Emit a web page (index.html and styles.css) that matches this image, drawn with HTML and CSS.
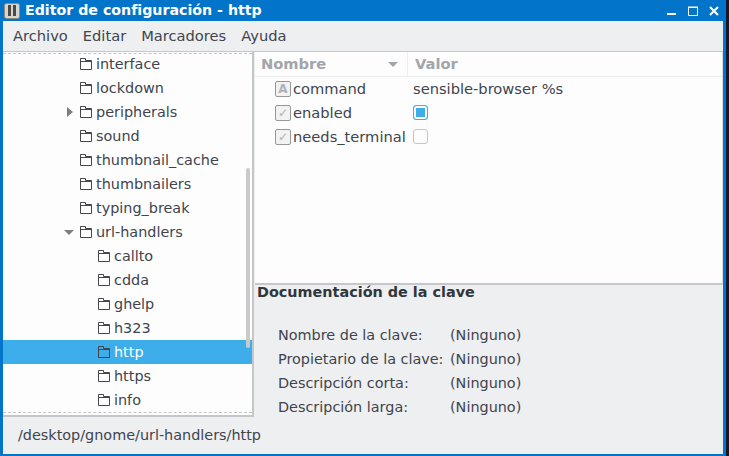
FILE: index.html
```html
<!DOCTYPE html>
<html lang="es">
<head>
    <meta charset="UTF-8">
    <title>Editor de configuración - http</title>
    <link rel="stylesheet" href="styles.css">
</head>
<body>
<svg class="defs" width="0" height="0">
    <symbol id="folder" viewBox="0 0 12 12">
        <path d="M.5 11.500V.5h5v2h6v9zM.5 3.500h11" fill="none" stroke="currentColor"/>
    </symbol>
</svg>
<div id="window">
    <div class="titlebar">
        <svg class="appicon" width="16" height="16" viewBox="0 0 16 16">
            <rect x=".5" y=".5" width="15" height="15" rx="2" fill="#d8d5cc" stroke="#8d8a82"/>
            <rect x="4" y="2" width="3" height="11" fill="#4a4a4a"/>
            <rect x="9" y="2" width="3" height="11" fill="#4a4a4a"/>
        </svg>
        <span class="title">Editor de configuración - http</span>
        <div class="winbtns">
            <svg width="10" height="10" viewBox="0 0 10 10"><rect y="7" width="9" height="2" fill="#fff"/></svg>
            <svg width="10" height="10" viewBox="0 0 10 10"><path d="M.5 1.500h9v8h-9zM0 1h10" fill="none" stroke="#fff"/></svg>
            <svg width="10" height="10" viewBox="0 0 10 10"><path d="M1 1l8 8M9 1l-8 8" fill="none" stroke="#fff" stroke-width="2"/></svg>
        </div>
    </div>
    <ul class="menubar">
        <li>Archivo</li>
        <li>Editar</li>
        <li>Marcadores</li>
        <li>Ayuda</li>
    </ul>
    <div class="main">
        <div class="left">
            <div class="tree">
                <ul class="treelist">
                    <li class="lvl1"><i class="arrow"></i><svg class="folder"><use href="#folder"/></svg>interface</li>
                    <li class="lvl1"><i class="arrow"></i><svg class="folder"><use href="#folder"/></svg>lockdown</li>
                    <li class="lvl1"><i class="arrow closed"></i><svg class="folder"><use href="#folder"/></svg>peripherals</li>
                    <li class="lvl1"><i class="arrow"></i><svg class="folder"><use href="#folder"/></svg>sound</li>
                    <li class="lvl1"><i class="arrow"></i><svg class="folder"><use href="#folder"/></svg>thumbnail_cache</li>
                    <li class="lvl1"><i class="arrow"></i><svg class="folder"><use href="#folder"/></svg>thumbnailers</li>
                    <li class="lvl1"><i class="arrow"></i><svg class="folder"><use href="#folder"/></svg>typing_break</li>
                    <li class="lvl1"><i class="arrow open"></i><svg class="folder"><use href="#folder"/></svg>url-handlers</li>
                    <li class="lvl2"><svg class="folder"><use href="#folder"/></svg>callto</li>
                    <li class="lvl2"><svg class="folder"><use href="#folder"/></svg>cdda</li>
                    <li class="lvl2"><svg class="folder"><use href="#folder"/></svg>ghelp</li>
                    <li class="lvl2"><svg class="folder"><use href="#folder"/></svg>h323</li>
                    <li class="lvl2 selected"><svg class="folder"><use href="#folder"/></svg>http</li>
                    <li class="lvl2"><svg class="folder"><use href="#folder"/></svg>https</li>
                    <li class="lvl2"><svg class="folder"><use href="#folder"/></svg>info</li>
                </ul>
                <div class="scrollthumb"></div>
            </div>
            <div class="statusbar">/desktop/gnome/url-handlers/http</div>
        </div>
        <div class="right">
            <div class="table">
                <div class="thead">
                    <div class="th name">Nombre<i class="sort"></i></div>
                    <div class="th val">Valor</div>
                </div>
                <div class="row">
                    <div class="keycell"><span class="typeicon">A</span>command</div>
                    <div class="valcell">sensible-browser %s</div>
                </div>
                <div class="row">
                    <div class="keycell"><span class="typeicon check">✓</span>enabled</div>
                    <div class="valcell"><span class="box on"></span></div>
                </div>
                <div class="row">
                    <div class="keycell"><span class="typeicon check">✓</span>needs_terminal</div>
                    <div class="valcell"><span class="box"></span></div>
                </div>
            </div>
            <div class="doc">
                <h3>Documentación de la clave</h3>
                <dl class="docgrid">
                    <dt>Nombre de la clave:</dt><dd>(Ninguno)</dd>
                    <dt>Propietario de la clave:</dt><dd>(Ninguno)</dd>
                    <dt>Descripción corta:</dt><dd>(Ninguno)</dd>
                    <dt>Descripción larga:</dt><dd>(Ninguno)</dd>
                </dl>
            </div>
        </div>
    </div>
</div>
</body>
</html>
```

FILE: styles.css
```css
*{
    margin: 0;
    padding: 0;
    box-sizing: border-box;
}
html,body{
    height: 100%;
}
body{
    background: #0c1a2c;
    font-family: "DejaVu Sans", sans-serif;
    font-size: 14.4px;
    color: #3f444e;
    overflow: hidden;
}
li{
    list-style: none;
}
.defs{
    position: absolute;
}
#window{
    width: 726px;
    height: 456px;
    padding-top: 1px;
    background: #0274c9;
    display: flex;
    flex-direction: column;
    border-left: 3px solid #0274c9;
    border-right: 3px solid #0274c9;
    border-bottom: 2px solid #0274c9;
}
.titlebar{
    height: 20px;
    flex: none;
    display: flex;
    align-items: center;
    color: #fff;
    font-weight: bold;
    font-size: 14.2px;
}
.title{
    margin-top: -2px;
}
.appicon{
    margin: 0 5px 0 1px;
}
.winbtns{
    margin-left: auto;
    display: flex;
    gap: 11px;
    margin-right: 4px;
}
.menubar{
    height: 31px;
    flex: none;
    display: flex;
    align-items: center;
    gap: 15px;
    padding: 0 0 2px 10px;
    font-size: 14.67px;
    background: #eeeff1;
    border-bottom: 1px solid #c4c6ca;
}
.main{
    flex: 1;
    min-height: 0;
    display: flex;
    background: #eeeff1;
}
.left{
    width: 251px;
    flex: none;
}
.tree{
    height: 365px;
    position: relative;
    background: #fdfdfd;
    border-right: 2px solid #c4c6ca;
    border-bottom: 2px solid #c4c6ca;
    overflow: hidden;
}
.treelist{
    margin-top: 1px;
    border-top: 1px dashed #c4c6ca;
    border-bottom: 1px dashed #c4c6ca;
}
.treelist li{
    height: 24px;
    display: flex;
    align-items: center;
}
.treelist li:first-child{
    margin-top: -2px;
}
.lvl1{
    padding-left: 62px;
}
.lvl2{
    padding-left: 95px;
}
.treelist .selected{
    background: #3daee9;
    color: #fff;
}
.selected .folder{
    color: #3f444e;
}
.arrow{
    width: 15px;
    flex: none;
    height: 10px;
}
.arrow.closed{
    width: 0;
    height: 0;
    margin: 0 7px 0 2px;
    border-left: 6px solid #7c7e82;
    border-top: 5px solid transparent;
    border-bottom: 5px solid transparent;
}
.arrow.open{
    width: 0;
    height: 0;
    margin: 0 6px 0 -1px;
    border-top: 5px solid #7c7e82;
    border-left: 5px solid transparent;
    border-right: 5px solid transparent;
}
.folder{
    width: 12px;
    height: 12px;
    flex: none;
    margin-right: 4px;
    color: #45474c;
}
.scrollthumb{
    position: absolute;
    left: 243px;
    top: 116px;
    width: 4px;
    height: 180px;
    border-radius: 2px;
    background: #c9cacc;
}
.statusbar{
    padding: 10px 0 0 15px;
    line-height: 17px;
    white-space: nowrap;
}
.right{
    flex: 1;
    min-width: 0;
    display: flex;
    flex-direction: column;
    margin-left: 1px;
}
.table{
    height: 233px;
    flex: none;
    background: #fdfdfd;
    border-right: 1px solid #dcdde0;
    border-bottom: 2px solid #c4c6ca;
    font-size: 14.67px;
}
.thead{
    height: 25px;
    display: grid;
    grid-template-columns: 153px 1fr;
    border-bottom: 1px solid #eeeff1;
}
.th{
    display: flex;
    align-items: center;
    padding: 0 0 2px 6px;
    font-weight: bold;
    color: #a3a5a9;
}
.th.name{
    border-right: 1px solid #eeeff1;
}
.th.val{
    padding-left: 7px;
}
.sort{
    margin: 2px 9px 0 auto;
    border-top: 5px solid #a3a5a9;
    border-left: 5px solid transparent;
    border-right: 5px solid transparent;
}
.row{
    height: 24px;
    display: grid;
    grid-template-columns: 153px 1fr;
    align-items: center;
}
.keycell{
    display: flex;
    align-items: center;
    padding: 0 0 2px 20px;
    white-space: nowrap;
}
.typeicon{
    width: 16px;
    height: 16px;
    flex: none;
    margin: 2px 2px 0 0;
    border: 1px solid #96989c;
    border-radius: 2px;
    background: #f2f2f3;
    color: #b0b2b5;
    font-size: 12px;
    font-weight: bold;
    line-height: 14px;
    text-align: center;
}
.typeicon.check{
    font-weight: normal;
    color: #b0b2b5;
}
.valcell{
    padding: 0 0 2px 5px;
    display: flex;
    align-items: center;
}
.box{
    width: 15px;
    height: 15px;
    margin-top: 1px;
    border: 1px solid #c4c6ca;
    border-radius: 3px;
    background: #fcfcfc;
}
.box.on{
    border-color: #3daee9;
    box-shadow: inset 0 0 0 2px #fcfcfc;
    background: #3daee9;
}
.doc{
    flex: 1;
}
.doc h3{
    margin-top: -1px;
    font-size: 14.4px;
    font-weight: bold;
    line-height: 17px;
    padding-left: 2px;
    color: #31363b;
}
.docgrid{
    display: grid;
    grid-template-columns: 172px 1fr;
    grid-auto-rows: 24px;
    align-items: center;
    padding: 22px 0 0 23px;
}
```
